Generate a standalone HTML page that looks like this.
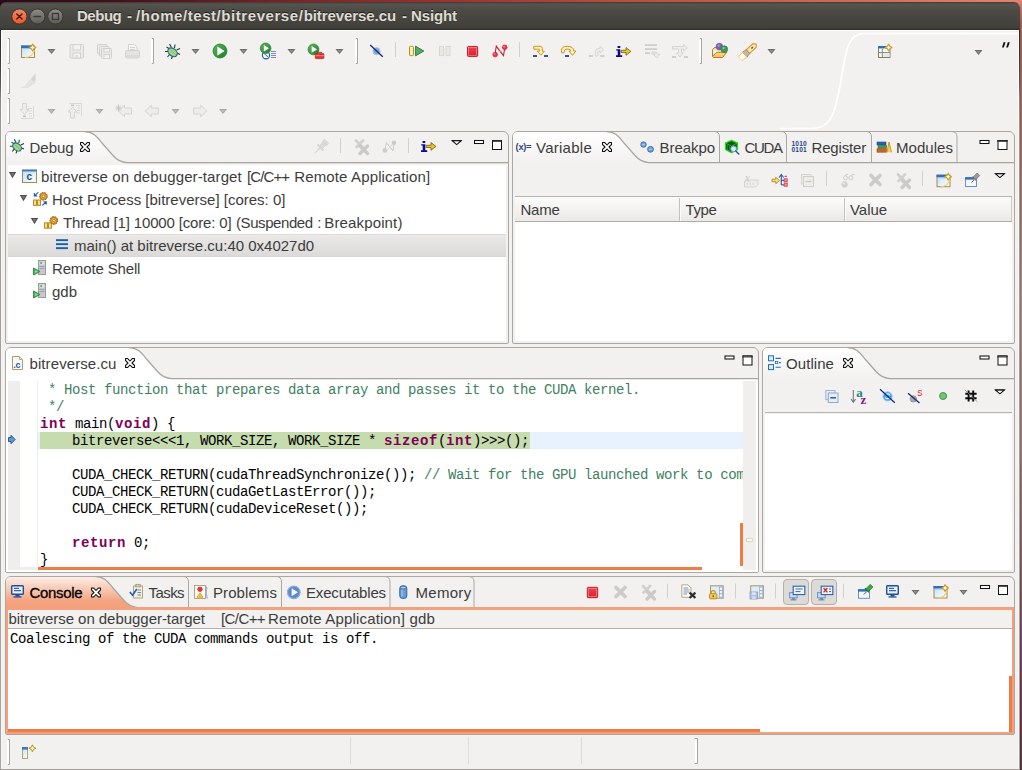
<!DOCTYPE html>
<html>
<head>
<meta charset="utf-8">
<title>Debug - Nsight</title>
<style>
html,body{margin:0;padding:0;}
body{width:1022px;height:770px;overflow:hidden;position:relative;font-family:"Liberation Sans",sans-serif;background:#2c0a1e;}
.a{position:absolute;}
div{box-sizing:border-box;}
#desk{left:0;top:0;width:1022px;height:8px;background:linear-gradient(90deg,#2c0a1e 0%,#3a0d1c 8%,#7a2326 28%,#a0342f 45%,#b9503f 62%,#cf6d5b 85%,#e88270 100%);}
#deskr{left:1020px;top:0;width:1px;height:770px;background:linear-gradient(180deg,#e08370 0%,#c06a5a 1.2%,#9a5548 3%,#9a5a4e 8%,#905a52 19.5%,#8c7872 39%,#8c6866 58%,#5e3042 91%,#52283c 100%);}
#deskr2{left:1021px;top:0;width:1px;height:770px;background:linear-gradient(180deg,#e88270 0%,#c87060 1.2%,#a86054 3%,#a46358 8%,#a46c64 19.5%,#a88a85 39%,#a07a78 58%,#744052 91%,#683848 100%);}
.edge{top:30px;width:1px;height:740px;background:linear-gradient(180deg,#2d2c29 0px,#3a3935 30px,#5a5955 54px,#8a8884 70px,#a09d98 104px,#a8a6a2 100%);}
.edgehi{top:30px;width:1px;height:740px;background:linear-gradient(180deg,#ffffff 0px,#ffffff 60px,#f6f6f5 120px,#f6f6f5 100%);}
#win{left:0;top:2px;width:1020px;height:768px;border-radius:6px 6px 0 0;overflow:hidden;}
#winbg{left:0px;top:28px;width:1020px;height:740px;background:#f2f1f0;border-top:1px solid #fdfcfc;}
#title{left:0;top:0;width:1020px;height:28px;background:linear-gradient(180deg,#3b3a36 0px,#55544e 2px,#4b4a45 9px,#403f3a 26px,#2e2d29 28px);}
.tt{top:4px;font-weight:bold;font-size:15px;color:#dfdbd2;white-space:nowrap;line-height:20px;text-shadow:0 -1px 0 rgba(0,0,0,.6);}
.t{font-size:15px;color:#3c3c3c;white-space:nowrap;line-height:23px;height:23px;}
.tab{font-size:15px;color:#3c3c3c;white-space:nowrap;line-height:20px;height:20px;}
.m{font-family:"Liberation Mono",monospace;font-size:14px;letter-spacing:-0.4px;line-height:17px;height:17px;white-space:pre;color:#000;margin-top:1px;}
.k{color:#7f0055;font-weight:bold;letter-spacing:0.6px;}
.c{color:#3f7f5f;}
.pb{border:1px solid #aba7a2;border-radius:6px 6px 2px 2px;}
.wh{background:#fff;}
svg{position:absolute;overflow:visible;}
</style>
</head>
<body>
<div id="desk" class="a"></div>
<div id="deskr" class="a"></div>
<div id="deskr2" class="a"></div>
<div id="win" class="a">
  <div id="title" class="a"></div>
  <div id="winbg" class="a"></div>
  <div class="a tt" style="left:77px;letter-spacing:-0.47px;">Debug</div>
  <div class="a tt" style="left:127px;">-</div>
  <div class="a tt" style="left:136px;letter-spacing:0.56px;">/home/test/bitreverse/</div>
  <div class="a tt" style="left:303.7px;letter-spacing:-0.08px;">bitreverse.cu</div>
  <div class="a tt" style="left:402px;">-</div>
  <div class="a tt" style="left:411px;letter-spacing:-0.11px;">Nsight</div>
</div>
<div class="a edge" style="left:0"></div><div class="a edge" style="left:1019px"></div><div class="a edgehi" style="left:1px"></div><div class="a edgehi" style="left:1018px"></div>
<div class="a" style="left:0px;top:769px;width:1020px;height:1px;background:#a5a29d;"></div>

<svg class="a" style="left:0;top:0" width="120" height="32">
 <defs>
  <linearGradient id="gClose" x1="0" y1="0" x2="0" y2="1"><stop offset="0" stop-color="#f28a64"/><stop offset="1" stop-color="#ed5824"/></linearGradient>
  <linearGradient id="gWb" x1="0" y1="0" x2="0" y2="1"><stop offset="0" stop-color="#8d8c87"/><stop offset="1" stop-color="#5c5b56"/></linearGradient>
 </defs>
 <circle cx="19.4" cy="16.5" r="7.6" fill="url(#gClose)" stroke="#36352f" stroke-width="1"/>
 <path d="M16.8,13.9 L22,19.1 M22,13.9 L16.8,19.1" stroke="#4a1608" stroke-width="1.4" stroke-linecap="round"/>
 <circle cx="37.4" cy="16.5" r="7.6" fill="url(#gWb)" stroke="#36352f" stroke-width="1"/>
 <path d="M34.1,16.5 H40.7" stroke="#3a3934" stroke-width="1.4" stroke-linecap="round"/>
 <circle cx="55.4" cy="16.5" r="7.6" fill="url(#gWb)" stroke="#36352f" stroke-width="1"/>
 <rect x="52.4" y="13.5" width="6" height="6" fill="none" stroke="#3a3934" stroke-width="1.3"/>
</svg>
<!-- ===== DEBUG PANEL ===== -->
<div class="a pb" style="left:5px;top:131px;width:504px;height:213px;"></div>
<div class="a wh" style="left:8px;top:165px;width:498px;height:176px;"></div>

<!-- debug tab header -->
<svg class="a" style="left:0;top:0" width="1022" height="770">
 <defs>
  <linearGradient id="tabg" x1="0" y1="0" x2="0" y2="1"><stop offset="0" stop-color="#ffffff"/><stop offset="1" stop-color="#f2f1f0"/></linearGradient>
  <linearGradient id="tabo" x1="0" y1="0" x2="0" y2="1"><stop offset="0" stop-color="#fdeee7"/><stop offset="0.78" stop-color="#f4a380"/><stop offset="1" stop-color="#f4a07c"/></linearGradient>
 </defs>
 <!-- Debug active tab -->
 <path d="M6,162.5 L6,137 Q6,132 11,132 L84.5,132 C93.0,132 97.0,137.5 102.0,143.5 L113.0,156 C117.0,160.5 121.0,162.5 127.0,162.5 Z" fill="url(#tabg)"/>
 <path d="M84.5,131.5 C93.0,131.5 97.0,137.0 102.0,143.0 L113.0,155.5 C117.0,160.0 121.0,162.5 127.0,162.5 L508,162.5" fill="none" stroke="#a9a5a0" stroke-width="1.25"/>
</svg>
<div class="a tab" style="left:29.5px;top:138px;">Debug</div>
<!-- selected row -->
<div class="a" style="left:8px;top:234px;width:498px;height:23px;background:linear-gradient(180deg,#dbdad8 0px,#dbdad8 1px,#eae9e8 1px,#e2e1df 12px,#dcdbd9 22px,#d8d7d5 22px,#d8d7d5 23px);"></div>
<div class="a t" style="left:41px;top:165px;letter-spacing:0.11px;">bitreverse on debugger-target</div>
<div class="a t" style="left:247px;top:165px;letter-spacing:-0.89px;">[C/C++</div>
<div class="a t" style="left:294.2px;top:165px;letter-spacing:0.14px;">Remote Application]</div>
<div class="a t" style="left:52px;top:188px;">Host Process [bitreverse] [cores: 0]</div>
<div class="a t" style="left:63px;top:211px;letter-spacing:-0.16px;">Thread [1] 10000 [core: 0]</div>
<div class="a t" style="left:236px;top:211px;letter-spacing:-0.42px;">(Suspended</div>
<div class="a t" style="left:317.2px;top:211px;">:</div>
<div class="a t" style="left:324.3px;top:211px;letter-spacing:0.14px;">Breakpoint)</div>
<div class="a t" style="left:74px;top:234px;">main() at bitreverse.cu:40 0x4027d0</div>
<div class="a t" style="left:52px;top:257px;letter-spacing:-0.15px;">Remote Shell</div>
<div class="a t" style="left:52px;top:280px;">gdb</div>
<!--DEBUGTREE-->

<!-- ===== VARIABLES PANEL ===== -->
<div class="a pb" style="left:512px;top:131px;width:503px;height:213px;"></div>
<div class="a wh" style="left:515px;top:196px;width:497px;height:145px;"></div>

<svg class="a" style="left:0;top:0" width="1022" height="770">
 <!-- Variables active tab -->
 <path d="M513,162.5 L513,137 Q513,132 518,132 L606.5,132 C615.0,132 619.0,137.5 624.0,143.5 L635.0,156 C639.0,160.5 643.0,162.5 649.0,162.5 Z" fill="url(#tabg)"/>
 <path d="M606.5,131.5 C615.0,131.5 619.0,137.0 624.0,143.0 L635.0,155.5 C639.0,160.0 643.0,162.5 649.0,162.5 L1014,162.5" fill="none" stroke="#a9a5a0" stroke-width="1.25"/>
 <!-- inactive tab separators -->
 <path d="M714,131.5 Q719.5,131.5 719.5,137 L719.5,162" fill="none" stroke="#aba7a2"/>
 <path d="M781,131.5 Q786.5,131.5 786.5,137 L786.5,162" fill="none" stroke="#aba7a2"/>
 <path d="M866,131.5 Q871.5,131.5 871.5,137 L871.5,162" fill="none" stroke="#aba7a2"/>
 <path d="M951.5,131.5 Q957,131.5 957,137 L957,162" fill="none" stroke="#aba7a2"/>
</svg>
<div class="a tab" style="left:536px;top:138px;letter-spacing:0.26px;">Variable</div>
<div class="a tab" style="left:659.5px;top:138px;letter-spacing:-0.05px;">Breakpo</div>
<div class="a tab" style="left:744.5px;top:138px;letter-spacing:-1.3px;">CUDA</div>
<div class="a tab" style="left:811.5px;top:138px;letter-spacing:-0.17px;">Register</div>
<div class="a tab" style="left:896px;top:138px;letter-spacing:0.04px;">Modules</div>
<!-- table header -->
<div class="a" style="left:515px;top:196px;width:497px;height:26px;background:linear-gradient(180deg,#fbfbfa 0%,#f4f3f2 50%,#eae9e7 100%);border-top:1px solid #b8b5b0;border-bottom:1px solid #b0ada8;"></div>
<div class="a" style="left:679px;top:198px;width:1px;height:23px;background:#c4c1bc;"></div><div class="a" style="left:680px;top:198px;width:1px;height:23px;background:#fbfbfa;"></div>
<div class="a" style="left:844px;top:198px;width:1px;height:23px;background:#c4c1bc;"></div><div class="a" style="left:845px;top:198px;width:1px;height:23px;background:#fbfbfa;"></div>
<div class="a" style="left:1011px;top:197px;width:1px;height:24px;background:#cfccc8;"></div>
<div class="a tab" style="left:520.5px;top:200px;letter-spacing:-0.25px;">Name</div>
<div class="a tab" style="left:685.5px;top:200px;letter-spacing:-0.38px;">Type</div>
<div class="a tab" style="left:850px;top:200px;letter-spacing:-0.05px;">Value</div>
<!--VARS-->

<!-- ===== EDITOR PANEL ===== -->
<div class="a pb" style="left:5px;top:347px;width:754px;height:226px;"></div>
<div class="a wh" style="left:6px;top:379px;width:752px;height:193px;"></div>

<svg class="a" style="left:0;top:0" width="1022" height="770">
 <path d="M6,379 L6,353 Q6,348 11,348 L129,348 C137.5,348 141.5,353.5 146.5,359.5 L157.5,372 C161.5,376.5 165.5,378.5 171.5,378.5 L171.5,379 Z" fill="#ffffff"/>
 <path d="M129,347.5 C137.5,347.5 141.5,353.0 146.5,359.0 L157.5,371.5 C161.5,376.0 165.5,378.5 171.5,378.5 L758,378.5" fill="none" stroke="#a9a5a0" stroke-width="1.25"/>
</svg>
<div class="a tab" style="left:29.5px;top:354px;letter-spacing:0.09px;">bitreverse.cu</div>
<!-- rulers -->
<div class="a" style="left:8px;top:381px;width:12px;height:189px;background:#efeeed;"></div>
<div class="a" style="left:8px;top:567px;width:30px;height:3px;background:#efeeed;"></div>
<div class="a" style="left:37px;top:381px;width:1px;height:189px;background:#ececec;"></div>
<div class="a" style="left:743px;top:381px;width:13px;height:189px;background:#f0efee;"></div>
<!-- current line -->
<div class="a" style="left:38px;top:432px;width:705px;height:17px;background:#e8f2fe;"></div>
<div class="a" style="left:40px;top:432px;width:490px;height:17px;background:#c6dbae;"></div>
<!-- code -->
<div class="a m" style="left:40px;top:381px;"><span class="c"> * Host function that prepares data array and passes it to the CUDA kernel.</span></div>
<div class="a m" style="left:40px;top:398px;"><span class="c"> */</span></div>
<div class="a m" style="left:40px;top:415px;"><span class="k">int</span> main(<span class="k">void</span>) {</div>
<div class="a m" style="left:40px;top:432px;">    bitreverse&lt;&lt;&lt;1, WORK_SIZE, WORK_SIZE * <span class="k">sizeof</span>(<span class="k">int</span>)&gt;&gt;&gt;();</div>
<div class="a m" style="left:40px;top:466px;width:703px;overflow:hidden;">    CUDA_CHECK_RETURN(cudaThreadSynchronize()); <span class="c">// Wait for the GPU launched work to complete</span></div>
<div class="a m" style="left:40px;top:483px;">    CUDA_CHECK_RETURN(cudaGetLastError());</div>
<div class="a m" style="left:40px;top:500px;">    CUDA_CHECK_RETURN(cudaDeviceReset());</div>
<div class="a m" style="left:40px;top:534px;">    <span class="k">return</span> 0;</div>
<div class="a m" style="left:40px;top:551px;">}</div>
<!-- scrollbars -->
<div class="a" style="left:38px;top:567px;width:664px;height:3px;background:#ef7b45;"></div>
<div class="a" style="left:740px;top:523px;width:3px;height:43px;background:#ef7b45;"></div>
<div class="a" style="left:746px;top:538px;width:7px;height:4px;border:1px solid #cfe0b8;background:#f6faf0;"></div>
<!--EDITOR-->

<!-- ===== OUTLINE PANEL ===== -->
<div class="a pb" style="left:762px;top:347px;width:253px;height:226px;"></div>
<div class="a wh" style="left:765px;top:414px;width:247px;height:156px;"></div>

<svg class="a" style="left:0;top:0" width="1022" height="770">
 <path d="M763,378.5 L763,353 Q763,348 768,348 L847.5,348 C856.0,348 860.0,353.5 865.0,359.5 L876.0,372 C880.0,376.5 884.0,378.5 890.0,378.5 Z" fill="url(#tabg)"/>
 <path d="M847.5,347.5 C856.0,347.5 860.0,353.0 865.0,359.0 L876.0,371.5 C880.0,376.0 884.0,378.5 890.0,378.5 L1014,378.5" fill="none" stroke="#a9a5a0" stroke-width="1.25"/>
</svg>
<div class="a tab" style="left:786px;top:354px;letter-spacing:0.07px;">Outline</div>
<div class="a" style="left:765px;top:412px;width:247px;height:1px;background:#b8b5b0;"></div>
<!--OUTLINE-->

<!-- ===== CONSOLE PANEL ===== -->
<div class="a pb" style="left:5px;top:576px;width:1010px;height:159px;"></div>

<svg class="a" style="left:0;top:0" width="1022" height="770">
 <path d="M6,608 L6,582 Q6,577 11,577 L95.5,577 C104.0,577 108.0,582.5 113.0,588.5 L124.0,601 C128.0,605.5 132.0,607.5 138.0,607.5 L138,608 Z" fill="url(#tabo)"/>
 <path d="M95.5,576.5 C104.0,576.5 108.0,582.0 113.0,588.0 L124.0,600.5 C128.0,605.0 132.0,607.5 138.0,607.5" fill="none" stroke="#a9a5a0" stroke-width="1.25"/>
 <path d="M183,576.5 Q188.5,576.5 188.5,582 L188.5,607" fill="none" stroke="#aba7a2"/>
 <path d="M276,576.5 Q281.5,576.5 281.5,582 L281.5,607" fill="none" stroke="#aba7a2"/>
 <path d="M384.5,576.5 Q390,576.5 390,582 L390,607" fill="none" stroke="#aba7a2"/>
 <path d="M468.5,576.5 Q474,576.5 474,582 L474,607" fill="none" stroke="#aba7a2"/>
</svg>
<!-- orange frame -->
<div class="a" style="left:6px;top:607px;width:1008px;height:127px;border:2px solid #f4a07c;border-top-width:3px;border-bottom-width:2px;"></div>
<div class="a wh" style="left:8px;top:629px;width:1004px;height:103px;"></div>
<div class="a" style="left:8px;top:628px;width:1004px;height:1px;background:#b4b1ac;"></div>
<div class="a tab" style="left:29.5px;top:583px;letter-spacing:-0.32px;color:#000;-webkit-text-stroke:0.3px #000;">Console</div>
<div class="a tab" style="left:148.5px;top:583px;letter-spacing:-0.57px;">Tasks</div>
<div class="a tab" style="left:213px;top:583px;letter-spacing:0.08px;">Problems</div>
<div class="a tab" style="left:306px;top:583px;letter-spacing:-0.16px;">Executables</div>
<div class="a tab" style="left:415.5px;top:583px;letter-spacing:0.3px;">Memory</div>
<div class="a tab" style="left:8.5px;top:609px;letter-spacing:-0.04px;">bitreverse on debugger-target</div>
<div class="a tab" style="left:221px;top:609px;letter-spacing:-0.59px;">[C/C++</div>
<div class="a tab" style="left:268px;top:609px;letter-spacing:0.19px;">Remote Application] gdb</div>
<div class="a m" style="left:10px;top:630px;">Coalescing of the CUDA commands output is off.</div>
<!-- scroll indicators -->
<div class="a" style="left:8px;top:729px;width:752px;height:3px;background:#ef7b45;"></div>
<div class="a" style="left:1009px;top:676px;width:3px;height:56px;background:#ef7b45;"></div>
<!--CONSOLE-->

<!-- ===== STATUS BAR ===== -->
<!--PN-START--><svg class="a" style="left:0;top:0" width="1022" height="770">
<defs>
 <g id="tri"><path d="M0,0 H7.4 L3.7,6.2 Z" fill="#4f4f4f"/><path d="M1.8,1 H5.6 L3.7,4.2 Z" fill="#737373"/></g>
 <g id="gear"><circle r="3.9" fill="#e9a820" stroke="#8a4a12" stroke-width="0.9" stroke-dasharray="1.6 1.1"/><circle r="3.1" fill="#f0b83a" stroke="#b06a14" stroke-width="0.8"/><circle r="1.3" fill="#fff" stroke="#8a4a12" stroke-width="0.7"/></g>
 <g id="bars"><rect x="0.5" y="0.5" width="3" height="5.4" fill="#f6dc7a" stroke="#b8902a"/><rect x="4.5" y="0.5" width="3" height="5.4" fill="#f6dc7a" stroke="#b8902a"/></g>
 <g id="proc"><rect x="5.5" y="0.5" width="7" height="14" fill="#c4c8d4" stroke="#9a9c8c"/><rect x="6.5" y="1.5" width="5" height="3.2" fill="#dfe2ea"/><rect x="7.3" y="2.2" width="1.8" height="1.6" fill="#3aa84a"/><path d="M6.5,6.5 H11.5 M6.5,8.5 H11.5" stroke="#9ea2b2" stroke-width="1"/><path d="M0.5,8 L7,11.5 L0.5,15 Z" fill="#4cb05a" stroke="#2a8a3a" stroke-width="0.9" stroke-linejoin="round"/><path d="M2,10 L5,11.5 L2,13 Z" fill="#9ad8a0"/></g>
 <g id="xdis"><path d="M1.5,1.5 L10.5,10.5 M10.5,1.5 L1.5,10.5" stroke="#cdcbc8" stroke-width="3.7" stroke-linecap="round"/></g>
 <g id="xxdis"><path d="M1.5,1.5 L8.5,8.5 M8.5,1.5 L1.5,8.5" stroke="#d2d0cd" stroke-width="2.8" stroke-linecap="round" stroke-dasharray="1.2 0.8"/><path d="M5.5,7 L13,14.5 M13,7 L5.5,14.5" stroke="#cccac7" stroke-width="3.4" stroke-linecap="round"/></g>
 <g id="monitor"><rect x="0.7" y="0.7" width="11.6" height="8.6" rx="0.8" fill="#e8f1fb" stroke="#1f4f9a" stroke-width="1.4"/><path d="M3,3.4 H8 M3,5.6 H10" stroke="#3a66a8" stroke-width="1.1"/><rect x="4.5" y="10" width="4" height="1.4" fill="#1f4f9a"/><rect x="2.5" y="11.3" width="8" height="1.3" fill="#1f4f9a"/></g>
</defs>

<!-- ============ DEBUG TAB ============ -->
<g transform="translate(17,146.3) scale(0.93)">
 <g stroke="#1f3b3b" stroke-width="1.15" fill="none">
  <path d="M-2.5,-2.5 L-6,-4.5 M-3.5,0 L-7.5,0 M-2.5,2.5 L-5,5.5 M2,-3.5 L2.5,-7 M4,-1.5 L7.5,-3 M4.5,1.5 L7.5,3 M0,4 L-1,7.5 M-1,-4 L-3,-7.5"/>
 </g>
 <ellipse cx="0.5" cy="0.5" rx="5.2" ry="3.7" transform="rotate(40)" fill="#a9d18e" stroke="#1b6e7e" stroke-width="1.2"/>
 <path d="M-2,-1.5 L3,3" stroke="#7fb86a" stroke-width="1"/>
</g>
<use href="#closex" x="80" y="142"/>
<!-- debug toolbar -->
<g transform="translate(321,147) rotate(45)" fill="#dedcd9" stroke="#d0cdc9" stroke-width="0.6">
 <rect x="-3" y="-8" width="6" height="3"/><rect x="-2" y="-5" width="4" height="5"/><path d="M-4,0 H4 V1.5 H-4 Z"/><path d="M-0.5,1.5 L0,9 L0.5,1.5 Z"/>
</g>
<use href="#sep" x="340" y="138"/>
<use href="#xxdis" x="354.5" y="139"/>
<g stroke="#cfccc8" fill="none" stroke-width="1"><path d="M385,150 L386.5,142.5 L389.5,146.5 M390.5,147.5 L393,151 L394,144"/><path d="M386.5,143 L393,151 M386.5,151 L393,143" stroke-width="0.6"/></g>
<circle cx="384.8" cy="150.4" r="2.3" fill="#cfccc8"/><circle cx="394" cy="142.8" r="2.3" fill="#cfccc8"/>
<use href="#sep" x="408" y="138"/>
<use href="#istep" x="421" y="140.5"/>
<use href="#vmenu" x="451.3" y="140"/>
<use href="#minb" x="474" y="140"/>
<use href="#maxb" x="492" y="140"/>

<!-- tree expanders -->
<use href="#tri" x="8.8" y="172"/><use href="#tri" x="19.8" y="195"/><use href="#tri" x="30.8" y="218"/>
<!-- row1 icon: C launch -->
<g transform="translate(22,169)">
 <rect x="0.5" y="1.5" width="14" height="12" fill="url(#gWin)" stroke="#a8894b"/>
 <rect x="0" y="0.5" width="15" height="1.4" fill="#2e6fbc"/><rect x="0.5" y="1.9" width="14" height="1.2" fill="#8ab4e0"/>
 <text x="4.6" y="11.2" font-family="Liberation Sans" font-weight="bold" font-size="10" fill="#1f4f86">c</text>
</g>
<!-- row2 icon: host process -->
<use href="#bars" x="33" y="199.5"/>
<use href="#gear" x="43.4" y="196.3"/>
<path d="M38.3,192.3 L34.6,195.6 M34.3,193 V195.9 H37.2" stroke="#1f5aa8" stroke-width="1.1" fill="none"/>
<path d="M42.3,205.3 L46,202 M46.3,204.6 V201.7 H43.4" stroke="#1f5aa8" stroke-width="1.1" fill="none"/>
<!-- row3 icon: thread -->
<use href="#bars" x="44" y="222.3"/>
<use href="#gear" x="53.8" y="220.5"/>
<!-- row4: stack frame -->
<rect x="56" y="239.2" width="12" height="1.9" fill="#1a5fa8"/><rect x="56" y="243.2" width="12" height="1.9" fill="#1a5fa8"/><rect x="56" y="247.2" width="12" height="1.9" fill="#1a5fa8"/>
<!-- row5,6 -->
<use href="#proc" x="33" y="260"/><use href="#proc" x="33" y="283"/>

<!-- ============ VARIABLES TABS ============ -->
<text x="515.6" y="150" font-family="Liberation Sans" font-weight="bold" font-size="9.3" fill="#2b4a7c" letter-spacing="-0.3">(x)=</text>
<use href="#closex" x="602" y="142"/>
<circle cx="643.5" cy="144.6" r="2.7" fill="#6fa6d4" stroke="#2d6aa8" stroke-width="0.9"/>
<circle cx="650.5" cy="149.3" r="2.9" fill="#6fa6d4" stroke="#2d6aa8" stroke-width="0.9"/>
<path d="M642,144.6 H645 M649,149.3 H652" stroke="#b8d4ec" stroke-width="0.8"/>
<!-- CUDA -->
<path d="M731.5,140.3 L737.5,143 V149.5 L731.5,152.8 L725.5,149.5 V143 Z" fill="#0d5a12" stroke="#22dd22" stroke-width="1.3" stroke-linejoin="round"/>
<path d="M725.5,143 L731.5,146 L737.5,143 M731.5,146 V152.8" stroke="#22c022" stroke-width="0.8" fill="none"/>
<path d="M727.5,144.5 V150.5 M729.5,145.5 V151.5" stroke="#1a9a1a" stroke-width="0.7"/>
<circle cx="733.6" cy="148.8" r="2.9" fill="#dbeaf6" stroke="#6a9ac8" stroke-width="1"/>
<path d="M735.8,151 L738.8,154" stroke="#2d5aa0" stroke-width="1.5" stroke-linecap="round"/>
<!-- Registers -->
<g font-family="Liberation Sans" font-weight="bold" font-size="6.6" fill="#1f3f86" letter-spacing="0.1"><text x="791.6" y="145.6">1010</text><text x="791.6" y="151.6">0101</text></g>
<!-- Modules -->
<rect x="877" y="142" width="9" height="3" fill="#2d5fa8" stroke="#1f4a8a" stroke-width="0.6"/>
<rect x="878" y="145.3" width="8.5" height="3" fill="#3f9a5a" stroke="#2a7a42" stroke-width="0.6"/>
<rect x="877" y="148.8" width="9.5" height="3.4" fill="#c8642a" stroke="#a04a1a" stroke-width="0.6"/>
<path d="M887,152.3 L889,142 L891.5,152.3" fill="#f8d048" stroke="#d09a1a" stroke-width="1" stroke-linejoin="round"/>
<use href="#minb" x="979.5" y="140"/><use href="#maxb" x="997.5" y="140"/>

<!-- variables toolbar -->
<g stroke="#d3d0cc" fill="#efedeb" stroke-width="0.9">
 <path d="M746.5,180 H758 V184.5 L755.5,187 H744.5 V182 Z"/>
 <path d="M746.5,183.8 H747.8 M749.5,183.8 H750.8 M752.5,183.8 H753.8" stroke="#c8c5c1" stroke-width="1.3"/>
</g>
<text x="744.5" y="182" font-family="Liberation Serif" font-style="italic" font-size="12" fill="#cfccc8">x</text>
<!-- logical structure -->
<path d="M772,179.3 H775.8 V177.3 L779.6,180.5 L775.8,183.7 V181.7 H772 Z" fill="#fbe088" stroke="#b8860b" stroke-width="0.9" stroke-linejoin="round"/>
<path d="M781.3,175.5 V185 M781.3,180.3 H784 M781.3,184.8 H784 M779,177.5 L781.3,174.5 L783.6,177.5" stroke="#3a62b0" stroke-width="1.2" fill="none"/>
<path d="M784.5,176.3 H787" stroke="#3a62b0" stroke-width="1"/>
<rect x="784.2" y="178.8" width="3" height="3" fill="#f0a0a8" stroke="#d63a4a" stroke-width="0.9"/><rect x="784.2" y="183.2" width="3" height="3" fill="#f0a0a8" stroke="#d63a4a" stroke-width="0.9"/>
<!-- collapse all disabled -->
<rect x="801.5" y="174.5" width="9.5" height="9.5" fill="#f0eeec" stroke="#d6d3cf"/><rect x="803.5" y="176.5" width="10" height="10" fill="#efedeb" stroke="#d0cdc9"/><path d="M805.5,181.5 H811.5" stroke="#cac7c3" stroke-width="1.2"/>
<use href="#sep" x="826" y="171"/>
<!-- glasses disabled -->
<g fill="none" stroke="#cfccc8" stroke-width="1"><circle cx="845.5" cy="177.8" r="2"/><circle cx="850.8" cy="177.8" r="2"/><path d="M845,175.8 Q846,173.8 848,174.3 M851,175.8 Q852.5,173.6 854.5,174.8"/></g>
<circle cx="844.6" cy="184.4" r="3.1" fill="#d2d0cd"/><circle cx="843.7" cy="183.5" r="1.2" fill="#e8e6e4"/>
<use href="#xdis" x="869.5" y="174"/>
<use href="#xxdis" x="896.5" y="173"/>
<use href="#sep" x="922" y="171"/>
<use href="#pnew" x="936.5" y="173.7"/>
<!-- pin view -->
<rect x="965.5" y="177.7" width="11" height="8.8" fill="#f2f8fd" stroke="#6f90c0"/><rect x="965" y="177.2" width="9" height="2.4" fill="#2e6fbc"/>
<path d="M971.5,182.5 L974,180" stroke="#555" stroke-width="0.9"/>
<g transform="translate(975.5,177.2) rotate(45)"><rect x="-1.8" y="-4.2" width="3.6" height="5.6" fill="#9a9a9a" stroke="#6a6a6a" stroke-width="0.6"/><rect x="-2.6" y="1.2" width="5.2" height="1.3" fill="#777"/></g>
<use href="#vmenu" x="994.5" y="173"/>

<!-- ============ EDITOR TAB ============ -->
<path d="M12.5,356.5 H19.5 L22.5,359.5 V369.5 H12.5 Z" fill="#f5f9fd" stroke="#b39b62" stroke-linejoin="round"/>
<path d="M19.5,356.5 V359.5 H22.5" fill="#e8dcb8" stroke="#b39b62" stroke-width="0.8"/>
<text x="13.3" y="367.6" font-family="Liberation Sans" font-weight="bold" font-size="9" fill="#2a5a9a" letter-spacing="-0.4">.c</text>
<use href="#closex" x="125" y="358"/>
<use href="#minb" x="724.5" y="355.5"/><use href="#maxb" x="742.5" y="355.5"/>
<!-- instruction pointer arrow -->
<path d="M8.5,437.5 H11 V435.2 L15.2,439.5 L11,443.8 V441.5 H8.5 Z" fill="#5b9bd5" stroke="#1f4f9a" stroke-width="0.9" stroke-linejoin="round"/>

<!-- ============ OUTLINE ============ -->
<rect x="768.5" y="355.8" width="5" height="5" fill="#dcebf8" stroke="#1e6fbf"/><rect x="768.5" y="364.6" width="5" height="5" fill="#dcebf8" stroke="#1e6fbf"/>
<path d="M775.5,358.4 H780.8 M775.5,367.2 H780.8 M779,362.6 H780.8" stroke="#1e6fbf" stroke-width="1.1"/>
<rect x="775.6" y="361.4" width="2.2" height="2.2" fill="#fff" stroke="#1e6fbf" stroke-width="0.8"/>
<use href="#closex" x="843" y="358"/>
<use href="#minb" x="979.5" y="355.5"/><use href="#maxb" x="997.5" y="355.5"/>
<!-- outline toolbar -->
<rect x="825.8" y="390.5" width="9.2" height="9.2" fill="#e4edf8" stroke="#9fb4d2"/><rect x="828.3" y="393" width="9.7" height="9.5" fill="#e4edf8" stroke="#8fa8cc"/><path d="M830.3,397.8 H836" stroke="#2a5a9a" stroke-width="1.5"/>
<path d="M853.3,390 V401.5 M851,399 L853.3,402.3 L855.6,399" stroke="#6c7a86" stroke-width="1.1" fill="none"/>
<text x="856.3" y="396.6" font-family="Liberation Serif" font-weight="bold" font-size="13" fill="#1b8a78">a</text>
<text x="860.6" y="403.6" font-family="Liberation Serif" font-weight="bold" font-size="13" fill="#8a1a8a">z</text>
<circle cx="887.6" cy="396.4" r="4.6" fill="#4ea6e6" stroke="#8cc6f0" stroke-width="0.8"/>
<path d="M885.5,394.5 Q888,393 890,395 M885.2,397.6 Q887.6,399.8 890,397.6" stroke="#e6f3fc" stroke-width="1.1" fill="none"/>
<path d="M880,389.3 L894.8,402.7" stroke="#17247f" stroke-width="1.2"/>
<circle cx="913.4" cy="398.9" r="3.2" fill="#a8a8a8" stroke="#8a8a8a" stroke-width="0.7"/>
<text x="0" y="0" transform="translate(917.2,396.2) scale(0.82,1)" font-family="Liberation Sans" font-size="9.5" fill="#d8142a">S</text>
<path d="M908,393.3 L919.5,403" stroke="#17247f" stroke-width="1.2"/>
<circle cx="943.1" cy="396" r="3.5" fill="#77c277" stroke="#3a9a4a" stroke-width="1"/>
<path d="M968.6,390.5 V401.5 M973.2,390.5 V401.5 M965.3,393.8 H976.6 M965.3,398.3 H976.6" stroke="#0a0a0a" stroke-width="1.9"/>
<path d="M964.8,389.8 L977.3,401.8" stroke="#8a8a8a" stroke-width="0.8"/>
<use href="#vmenu" x="994.5" y="389.2"/>

<!-- ============ CONSOLE ============ -->
<use href="#monitor" x="11" y="585"/>
<use href="#closex" x="91" y="587.5"/>
<!-- Tasks -->
<rect x="133.5" y="586" width="9" height="12" fill="#f3eee0" stroke="#b8a47a"/><rect x="135.8" y="584.3" width="4.4" height="2.6" fill="#d8d0b8" stroke="#9a8a60" stroke-width="0.7"/>
<path d="M137.5,590 H141 M137.5,592.5 H141 M137.5,595 H141" stroke="#6a86b8" stroke-width="1"/>
<path d="M129.8,592 L132.6,595.2 L136.8,589" stroke="#1f5fb8" stroke-width="1.6" fill="none"/>
<!-- Problems -->
<rect x="194.5" y="585.5" width="11" height="13" fill="#fbfaf6" stroke="#b8a47a"/>
<path d="M204.5,585.5 Q207.5,587 206.5,590 Q205.5,593 207.5,598.5" fill="none" stroke="#9ab0d0" stroke-width="1.2"/>
<circle cx="200" cy="589.3" r="2.3" fill="#e03a3a" stroke="#b81e1e" stroke-width="0.6"/>
<path d="M200,592.8 L203,597.3 H197 Z" fill="#f8c838" stroke="#c8901a" stroke-width="0.7" stroke-linejoin="round"/>
<!-- Executables -->
<circle cx="293.8" cy="592.3" r="6.3" fill="#5a88c8" stroke="#8fb0dc" stroke-width="1.2"/>
<path d="M291.6,588.3 L298,592.3 L291.6,596.3 Z" fill="#f4f8fc"/>
<!-- Memory -->
<rect x="399.8" y="585.8" width="7" height="12.6" rx="2.6" fill="#6a9ad8" stroke="#2d5fa8" stroke-width="1"/>
<ellipse cx="403.3" cy="587.6" rx="2.8" ry="1.3" fill="#b8d0ee" stroke="#2d5fa8" stroke-width="0.7"/>
<path d="M402,590 V596.5" stroke="#a8c4ea" stroke-width="1.3"/>

<!-- console toolbar -->
<rect x="587.3" y="587.3" width="10.4" height="10.4" rx="1" fill="url(#gRed)" stroke="#c81e2a"/><rect x="588.5" y="588.5" width="8" height="8" fill="none" stroke="#f08a92" stroke-width="0.7"/>
<use href="#xdis" x="614.5" y="586"/>
<use href="#xxdis" x="641.5" y="584.5"/>
<use href="#sep" x="667" y="583.5"/>
<!-- clear console -->
<path d="M681.8,584.8 H688 L691,587.8 V597.3 H681.8 Z" fill="#fbfaf4" stroke="#b8a880" stroke-linejoin="round"/>
<path d="M683.5,588 H688 M683.5,590 H689.5 M683.5,592 H689.5 M683.5,594 H687" stroke="#7f96c0" stroke-width="1"/>
<path d="M689.6,592.6 L695.4,598 M695.4,592.6 L689.6,598" stroke="#2e2e2e" stroke-width="2.3"/>
<!-- scroll lock -->
<rect x="710.5" y="585.8" width="12.7" height="12.4" fill="#dcecf8" stroke="#a89868"/>
<rect x="719" y="586.3" width="4" height="11.4" fill="#9ab4d8"/><rect x="719.9" y="587.6" width="2.2" height="2.2" fill="#fff"/><rect x="719.9" y="591" width="2.2" height="2.2" fill="#e8f0fa"/><rect x="719.9" y="594.4" width="2.2" height="2.2" fill="#fff"/>
<path d="M711.2,593.8 V592.6 Q711.2,590.6 713.2,590.6 Q715.2,590.6 715.2,592.6 V593.8" fill="none" stroke="#c8961a" stroke-width="1.2"/>
<rect x="709.6" y="593.6" width="7.2" height="5.2" rx="0.8" fill="#f4cc58" stroke="#b8860b" stroke-width="0.9"/><rect x="712.6" y="595.2" width="1.3" height="2" fill="#7a5a0a"/>
<use href="#sep" x="735" y="583.5"/>
<!-- word wrap / save (dim) -->
<rect x="750.7" y="585.8" width="12.7" height="12.4" fill="#dcecf8" stroke="#a89868"/>
<rect x="759.2" y="586.3" width="4" height="11.4" fill="#9ab4d8"/><rect x="760.1" y="587.6" width="2.2" height="2.2" fill="#fff"/><rect x="760.1" y="591" width="2.2" height="2.2" fill="#e8f0fa"/><rect x="760.1" y="594.4" width="2.2" height="2.2" fill="#fff"/>
<rect x="750" y="592" width="7.6" height="7" fill="#b4c0dc" stroke="#8a9cc4" stroke-width="0.8"/><rect x="751.8" y="592.4" width="4" height="2.4" fill="#e4eaf6"/><rect x="752" y="596.3" width="3.6" height="2.6" fill="#d4dcee"/>
<use href="#sep" x="775" y="583.5"/>
<!-- toggles -->
<rect x="783.5" y="579.5" width="25" height="25" rx="3.5" fill="#dddbd8" stroke="#b4b1ac"/>
<rect x="811.5" y="579.5" width="25" height="25" rx="3.5" fill="#dddbd8" stroke="#b4b1ac"/>
<g id="togi">
 <rect x="789.6" y="592.6" width="7.6" height="5.2" fill="#d0dcec" stroke="#6f8fc0" stroke-width="1"/><rect x="792" y="598.2" width="3" height="1.2" fill="#5f7fb0"/><rect x="790.5" y="599.3" width="6" height="1.1" fill="#5f7fb0"/>
 <rect x="793.2" y="586.2" width="11.6" height="8.4" fill="#eef4fc" stroke="#2d5fb0" stroke-width="1.1"/>
</g>
<path d="M795.5,589 H802.5 M795.5,591.6 H800.5" stroke="#3a66a8" stroke-width="1"/>
<use href="#togi" x="28" y="0"/>
<path d="M823.6,588 L827.4,592.4 M827.4,588 L823.6,592.4" stroke="#d81e2a" stroke-width="1.3"/><path d="M829,589 H831 M829,591.6 H831" stroke="#3a66a8" stroke-width="1"/>
<use href="#sep" x="843" y="583.5"/>
<!-- pin console -->
<rect x="858.5" y="589.7" width="11" height="8.6" fill="#f2f8fd" stroke="#6f90c0"/><rect x="858" y="589.2" width="9" height="2.4" fill="#2e6fbc"/>
<path d="M863.8,594.6 L866.3,592" stroke="#444" stroke-width="0.9"/>
<g transform="translate(868.3,589) rotate(45)"><rect x="-1.9" y="-4.6" width="3.8" height="6" fill="#3aa84a" stroke="#1f7a2a" stroke-width="0.7"/><rect x="-2.8" y="1.2" width="5.6" height="1.4" fill="#1f7a2a"/></g>
<!-- display selected console -->
<use href="#monitor" x="886" y="585"/>
<use href="#dd" x="911.5" y="590"/>
<use href="#pnew" x="933.5" y="585"/>
<use href="#dd" x="959.5" y="590"/>
<use href="#minb" x="980" y="585"/><use href="#maxb" x="998" y="585"/>

<!-- ============ STATUS BAR ============ -->
<use href="#grip" x="7" y="739"/>
<rect x="22.5" y="747.5" width="5" height="11" fill="url(#gWin)" stroke="#b8a468" stroke-width="1"/><rect x="22" y="747" width="6" height="2.6" fill="#3a78c0"/>
<path d="M32.4,744.8 L33.5,747.2 L35.9,748.3 L33.5,749.4 L32.4,751.8 L31.3,749.4 L28.9,748.3 L31.3,747.2 Z" fill="#fffbe0" stroke="#b8900f" stroke-width="1" stroke-linejoin="round"/>
<rect x="350" y="737" width="1" height="27" fill="#dedbd7"/><rect x="468" y="737" width="1" height="27" fill="#dedbd7"/><rect x="581" y="737" width="1" height="27" fill="#dedbd7"/>
<rect x="695" y="738" width="2" height="26" fill="#ffffff"/><path d="M694.5,738.5 H697.5 V763.5 H694.5" fill="none" stroke="#a9a59f"/>
</svg>
<!--PN-END-->

<!-- ===== TOOLBAR ===== -->
<!--TB-START--><svg class="a" style="left:0;top:0" width="1022" height="770">
<defs>
 <linearGradient id="gGreen" x1="0" y1="0" x2="1" y2="1"><stop offset="0" stop-color="#5cb85c"/><stop offset="1" stop-color="#1f7a2a"/></linearGradient>
 <linearGradient id="gWin" x1="0" y1="0" x2="1" y2="1"><stop offset="0" stop-color="#bfe0f8"/><stop offset="1" stop-color="#ffffff"/></linearGradient>
 <linearGradient id="gRed" x1="0" y1="0" x2="0" y2="1"><stop offset="0" stop-color="#e8485a"/><stop offset="1" stop-color="#d81e28"/></linearGradient>
 <linearGradient id="gFold" x1="0" y1="0" x2="0" y2="1"><stop offset="0" stop-color="#fbe7a6"/><stop offset="1" stop-color="#f0c060"/></linearGradient>
 <linearGradient id="gPersp" x1="0" y1="0" x2="1" y2="0"><stop offset="0" stop-color="#f2f1f0" stop-opacity="0"/><stop offset="1" stop-color="#ffffff"/></linearGradient>
 <g id="dd"><path d="M0,0 H8 L4,5 Z" fill="#6d6d6d"/><path d="M2,1 H6 L4,3.4 Z" fill="#8e8e8e"/></g>
 <g id="ddd"><path d="M0,0 H8 L4,5 Z" fill="#aaa7a3"/><path d="M2,1 H6 L4,3.4 Z" fill="#c2bfbb"/></g>
 <g id="grip"><rect x="0" y="0.5" width="2" height="25" fill="#ffffff"/><path d="M0.8,0.5 H2.5 V25.5 H0.8" fill="none" stroke="#a9a59f"/></g>
 <g id="sep"><rect x="0" y="0" width="1" height="15" fill="#d3d0cc"/></g>
 <g id="star"><path d="M0,-3.4 L1.2,-1.2 L3.4,0 L1.2,1.2 L0,3.4 L-1.2,1.2 L-3.4,0 L-1.2,-1.2 Z" fill="#fffbe0" stroke="#c99a1c" stroke-width="1.05" stroke-linejoin="round"/></g>
 <g id="vmenu"><path d="M0.9,0.7 H9.9 L5.4,4.6 Z" fill="#fff" stroke="#111" stroke-width="1.05" stroke-linejoin="miter"/><rect x="0.6" y="0.2" width="9.6" height="0.9" fill="#111"/></g>
 <g id="minb"><rect x="0.5" y="0.5" width="9" height="3" fill="#fff" stroke="#111" stroke-width="1.05"/></g>
 <g id="maxb"><rect x="0.5" y="0.5" width="9" height="9" fill="#fff" stroke="#111" stroke-width="1"/><rect x="0" y="0" width="10" height="1.9" fill="#1a1a1a"/><rect x="1" y="0.9" width="8" height="0.5" fill="#8a8a8a"/></g>
 <g id="closex"><path d="M0.55,0.55 H2.7 L5,3 L7.3,0.55 H9.45 V2.7 L7,5 L9.45,7.3 V9.45 H7.3 L5,7 L2.7,9.45 H0.55 V7.3 L3,5 L0.55,2.7 Z" fill="#fff" stroke="#0a0a0a" stroke-width="1.05" stroke-linejoin="round"/></g>
 <g id="istep"><path d="M1.6,0.5 H4.3 V2.5 H1.6 Z M0.2,3.7 H4.3 V9.8 H6.2 V11.4 H0 V9.8 H1.7 V5.1 H0.2 Z" fill="#0a0a8c"/>
   <path d="M5.2,4.8 H10 V2.1 L14.9,5.9 L10,9.8 V7 H5.2 Z" fill="#cdd42a" stroke="#8a4a10" stroke-width="0.8" stroke-linejoin="round"/></g>
 <g id="pnew"><rect x="0.5" y="1.5" width="13" height="11.5" fill="url(#gWin)" stroke="#a8894b"/><rect x="0" y="1" width="11" height="2.6" fill="#2e6fbc"/><rect x="1" y="3.6" width="9" height="1" fill="#9cc0e8"/><path d="M4,13 C9,13 12.8,10 13.3,5.5" fill="none" stroke="#f2cc52" stroke-width="1.1"/><use href="#star" x="11.6" y="3"/></g>
</defs>

<!-- perspective switcher curve -->
<path d="M644,128.5 H812 C832,128.5 836,110 841,80 C846,50 848,33.5 864,33.5 H1019" fill="none" stroke="url(#gPersp)" stroke-width="1.6"/>
<path d="M780,128.5 H812 C832,128.5 836,110 841,80 C846,50 848,33.5 864,33.5 H1019" fill="none" stroke="#ffffff" stroke-width="1.6"/>

<!-- grips -->
<use href="#grip" x="7" y="38"/><use href="#grip" x="7" y="68"/><use href="#grip" x="7" y="98"/>
<use href="#grip" x="151" y="38"/><use href="#grip" x="355" y="38"/><use href="#grip" x="699" y="38"/>
<use href="#sep" x="395" y="42"/><use href="#sep" x="519" y="42"/>

<!-- dropdowns row1 -->
<use href="#dd" x="47.5" y="49"/><use href="#dd" x="191.5" y="49"/><use href="#dd" x="239.5" y="49"/><use href="#dd" x="287.5" y="49"/><use href="#dd" x="335.5" y="49"/><use href="#dd" x="767.5" y="49"/><use href="#dd" x="974.5" y="50"/>
<!-- row3 disabled dropdowns -->
<use href="#ddd" x="47.5" y="109"/><use href="#ddd" x="95.5" y="109"/><use href="#ddd" x="171.5" y="109"/><use href="#ddd" x="219" y="109"/>

<!-- New -->
<use href="#pnew" x="21" y="44.5"/>

<!-- Save disabled -->
<g fill="#eceae8" stroke="#d4d2cf">
 <rect x="70" y="44.5" width="13.5" height="13.5" rx="1"/>
 <rect x="73" y="44.5" width="7.5" height="5.5" fill="#f4f3f2"/>
 <rect x="73" y="53" width="7.5" height="5" fill="#f4f3f2"/>
 <rect x="75.5" y="55" width="2.5" height="3" fill="#dedcd9" stroke="none"/>
</g>
<!-- Save all disabled -->
<g fill="#eceae8" stroke="#d4d2cf">
 <rect x="97.5" y="44.5" width="9.5" height="9.5" rx="1"/>
 <rect x="99.5" y="46.5" width="9.5" height="9.5" rx="1"/>
 <rect x="101.5" y="48.5" width="10" height="10" rx="1"/>
 <rect x="104" y="48.5" width="5.5" height="3.5" fill="#f4f3f2"/>
 <rect x="104" y="54.5" width="5.5" height="4" fill="#f4f3f2"/>
</g>
<!-- Print disabled -->
<g fill="#eceae8" stroke="#d4d2cf">
 <path d="M128.5,51 V44.5 H134.5 L137,47 V51" fill="#f6f5f4"/>
 <rect x="125.5" y="50.5" width="14" height="7.5" rx="1.5" fill="#e6e4e2"/>
 <path d="M130,47.5 H135 M130,49.5 H135" fill="none"/>
 <rect x="126" y="55" width="13" height="3" fill="#dddbd8" stroke="none"/>
</g>

<!-- Debug bug -->
<g transform="translate(172.5,51.5)">
 <g stroke="#1f3b3b" stroke-width="1.1" fill="none">
  <path d="M-2.5,-2.5 L-6,-4.5 M-3.5,0 L-7.5,0 M-2.5,2.5 L-5,5.5 M2,-3.5 L2.5,-7 M4,-1.5 L7.5,-3 M4.5,1.5 L7.5,3 M0,4 L-1,7.5 M-1,-4 L-3,-7.5"/>
 </g>
 <ellipse cx="0.5" cy="0.5" rx="5.2" ry="3.7" transform="rotate(40)" fill="#a9d18e" stroke="#1b6e7e" stroke-width="1.2"/>
 <path d="M-2,-1.5 L3,3" stroke="#7fb86a" stroke-width="1"/>
</g>

<!-- Run -->
<circle cx="220" cy="51" r="6.9" fill="url(#gGreen)" stroke="#2b8a33" stroke-width="1"/>
<path d="M217.3,46.5 L224.6,51 L217.3,55.5 Z" fill="#fff"/>

<!-- Profile (run + clock) -->
<circle cx="266" cy="55.3" r="3.6" fill="#fff" stroke="#1f5fa8" stroke-width="1.2"/>
<path d="M266,55.5 L264.3,53.6 M266,55.5 L268,56.5" stroke="#1f5fa8" stroke-width="1" fill="none"/>
<circle cx="265.6" cy="48.3" r="5.3" fill="url(#gGreen)" stroke="#2b8a33" stroke-width="0.8"/>
<path d="M263.8,45 L269,48.3 L263.8,51.6 Z" fill="#fff"/>
<path d="M271,51.5 H276 M271,53.5 H276 M271,55.5 H276 M271,57.5 H276" stroke="#7b8cc0" stroke-width="1"/>

<!-- External tools -->
<circle cx="313.5" cy="49.4" r="5.4" fill="url(#gGreen)" stroke="#2b8a33" stroke-width="0.8"/>
<path d="M311.6,46 L317,49.4 L311.6,52.8 Z" fill="#fff"/>
<rect x="315.3" y="53.6" width="8.6" height="5" rx="0.8" fill="#d63a36" stroke="#c02622" stroke-width="0.8"/>
<path d="M317.5,53.5 V52.3 H321.7 V53.5" fill="none" stroke="#c02622" stroke-width="1"/>
<path d="M315.5,55.7 H324" stroke="#f2a09c" stroke-width="0.8"/>

<!-- Skip breakpoints -->
<circle cx="376.5" cy="51.2" r="3.6" fill="#79aacb" stroke="#a9c9de" stroke-width="1"/>
<path d="M370.2,45 L382.8,56.8" stroke="#17247f" stroke-width="1.3"/>

<!-- Resume -->
<rect x="409.5" y="46.4" width="4" height="9.2" rx="0.8" fill="#fdeeb0" stroke="#b98f24" stroke-width="1"/>
<path d="M415.6,46.2 L423.8,51 L415.6,55.8 Z" fill="#58ad60" stroke="#2a7f3d" stroke-width="1" stroke-linejoin="round"/>

<!-- Suspend disabled -->
<rect x="439.5" y="46.4" width="4" height="9.2" fill="#ebe9e6" stroke="#d9d6d2"/>
<rect x="446" y="46.4" width="4" height="9.2" fill="#ebe9e6" stroke="#d9d6d2"/>

<!-- Terminate -->
<rect x="467.5" y="46.4" width="10.2" height="10" rx="1" fill="url(#gRed)" stroke="#c81e2a" stroke-width="1"/>
<rect x="468.6" y="47.5" width="8" height="7.8" fill="none" stroke="#f08a92" stroke-width="0.7"/>

<!-- Disconnect -->
<g stroke="#cc1f30" fill="none" stroke-width="1.1">
 <path d="M495.2,53 L496.3,46.2 L499.5,50.3 M500.5,51.8 L503.5,55.6 L504.6,49"/>
 <path d="M498.5,50.6 L501.5,51.4" stroke-width="0.8"/>
</g>
<circle cx="495.2" cy="54.6" r="2.4" fill="#ea3548" stroke="#c81e2a" stroke-width="0.6"/>
<circle cx="504.7" cy="47.3" r="2.4" fill="#ea3548" stroke="#c81e2a" stroke-width="0.6"/>
<circle cx="494.6" cy="54" r="0.8" fill="#f9b0b8"/><circle cx="504.1" cy="46.7" r="0.8" fill="#f9b0b8"/>

<!-- Step into -->
<path d="M533.8,46.3 H540.2 Q542.3,46.3 542.3,48.4 V51.2 H544.3 L540.8,55.2 L537.3,51.2 H539.3 V49.2 H533.8 Z" fill="#fff3b8" stroke="#c9952a" stroke-width="1" stroke-linejoin="round"/>
<rect x="533" y="55" width="4" height="2" fill="#35548c"/><rect x="544" y="55" width="4" height="2" fill="#35548c"/>

<!-- Step over -->
<path d="M561.5,52.8 Q560.3,46.3 567,46.3 Q573.6,46.3 573.8,51 H575.8 L572.5,55.4 L569,51 H571 Q570.8,49 567,49 Q563.6,49 564,52.8 Z" fill="#fff3b8" stroke="#c9952a" stroke-width="1" stroke-linejoin="round"/>
<rect x="565" y="55" width="4" height="2" fill="#35548c"/>

<!-- Step return disabled -->
<path d="M595.3,56 V51.5 Q595.3,48.5 598.5,48.5 H600 V46.3 L603.7,49.6 L600,53 V51 H598.8 Q598,51 598,52 V56 Z" fill="#efedeb" stroke="#d6d3cf" stroke-width="0.9" stroke-linejoin="round"/>
<rect x="589" y="55" width="4" height="2" fill="#d0cdca"/><rect x="600.3" y="55" width="4" height="2" fill="#d0cdca"/>

<!-- Instruction stepping -->
<use href="#istep" x="616" y="45.5"/>

<!-- Drop to frame disabled -->
<g stroke="#cfccc9" stroke-width="1.8"><path d="M645,45.2 H657 M645,49.2 H657 M645,53.2 H650"/></g>
<path d="M652,52 H655 Q657.5,52 657.5,54.3 H659.8 L656.6,58 L653.4,54.3 H655.2 Q655,53.8 652,54 Z" fill="#efedeb" stroke="#d3d0cc" stroke-width="0.9" stroke-linejoin="round"/>

<!-- Step filters disabled -->
<path d="M672.5,46.5 H683.5 V44.5 L687.5,47.8 L683.5,51 V49 H681.5 V53 H683.3 L680,57 L676.7,53 H678.5 V49 H672.5 Z" fill="#efedeb" stroke="#d3d0cc" stroke-width="0.9" stroke-linejoin="round"/>
<rect x="672" y="56" width="4" height="2" fill="#d0cdca"/><rect x="684" y="56" width="4" height="2" fill="#d0cdca"/>

<!-- Open element folder -->
<path d="M712.5,49.5 L714.5,47.5 H722.5 V52" fill="#f7dc94" stroke="#c27a1c" stroke-width="1" stroke-linejoin="round"/>
<path d="M712.5,49.5 V56.5 L713.5,57.5 H722.5 L726.8,52.3 H716.8 L712.5,56.5" fill="url(#gFold)" stroke="#c27a1c" stroke-width="1" stroke-linejoin="round"/>
<circle cx="719.4" cy="46.6" r="3.3" fill="#7b62b8" stroke="#5d479c" stroke-width="0.6"/><circle cx="718.6" cy="45.6" r="1.1" fill="#b4a4dc"/>
<circle cx="724.3" cy="49.2" r="3.4" fill="#3f9a5a" stroke="#2a7a42" stroke-width="0.6"/><circle cx="723.5" cy="48.1" r="1.1" fill="#8fd0a0"/>

<!-- Search torch -->
<g transform="translate(748.3,51.3) rotate(-43)">
 <path d="M-0.5,-2.5 H8.5 L10.8,0 L8.5,2.5 H-0.5 Z" fill="#fbe6a8" stroke="#e0901e" stroke-width="1" stroke-linejoin="round"/>
 <path d="M-5,-3.4 L-0.5,-2.6 V2.6 L-5,3.4 Z" fill="#bab6be" stroke="#9a7a50" stroke-width="0.7"/>
 <path d="M-10.8,-2.6 L-5,-3.3 V3.3 L-10.8,2.6 Z" fill="#fffbe0" stroke="#f4c038" stroke-width="0.8"/>
 <path d="M-10.5,-1.6 L-7,-2 V2 L-10.5,1.6 Z" fill="#ffffff"/>
 <rect x="4.2" y="-0.7" width="2.2" height="1.4" fill="#2a5fb0"/>
</g>

<!-- Open perspective -->
<g transform="translate(878,45)">
 <rect x="0.5" y="1.5" width="11.5" height="11" fill="#f4f9fd" stroke="#8a7a55"/>
 <rect x="0" y="1" width="9" height="2.4" fill="#2e6fbc"/>
 <path d="M4.3,3.5 V12.5 M0.5,7.6 H12" stroke="#8a7a55" stroke-width="0.9"/>
 <rect x="5" y="8.2" width="6.6" height="3.8" fill="#d8ecfa"/>
 <use href="#star" x="10.6" y="2.5"/>
</g>
<!-- chevron -->
<path d="M1003.6,42.2 H1005.6 L1003.8,47.6 H1002 Z M1007.8,42.2 H1009.8 L1008,47.6 H1006.2 Z" fill="#111"/>

<!-- Row 2: disabled pen -->
<path d="M20.5,87.5 H27.5 L35.3,83 V74.2 L24,86.8 Z" fill="#e6e4e1" stroke="#e0ddd9" stroke-width="0.6"/>
<path d="M31.3,78.6 L35.3,74.2 V80.5 L33,81.8 Z" fill="#d8d5d1"/>
<!-- Row 3 disabled icons -->
<g fill="#efedeb" stroke="#d3d0cc" stroke-width="0.9" stroke-linejoin="round">
 <path d="M22.5,103.5 H26.5 V109.5 H28.8 L24.5,114.5 L20.2,109.5 H22.5 Z"/>
 <path d="M70.5,118 H74.5 V112 H76.8 L72.5,107 L68.2,112 H70.5 Z"/>
 <path d="M118.5,111 L124.5,105.2 V108 H131.5 V114 H124.5 V116.8 Z"/>
 <path d="M145.3,111 L151.3,105.2 V108 H158.3 V114 H151.3 V116.8 Z"/>
 <path d="M206.7,111 L200.7,105.2 V108 H193.7 V114 H200.7 V116.8 Z"/>
</g>
<g stroke="#dcd9d5" stroke-width="1" fill="none">
 <path d="M33.5,106 V118.5 M21,118.5 H33.5"/>
 <path d="M28,108.5 H32 M28,111 H32 M29,113.5 H32 M29,116 H32"/>
 <path d="M81.5,103 V116 M69,103.5 H81"/>
 <path d="M76,105.5 H80 M77,108 H80 M77,110.5 H80 M77,113 H80"/>
</g>
<rect x="23" y="115.5" width="3" height="1.6" fill="#c8c5c1"/><rect x="71" y="104.5" width="3" height="1.6" fill="#c8c5c1"/>
<path d="M116,105.5 L121,110.5 M121,105.5 L116,110.5 M118.5,104.5 V111.5 M115.5,108 H121.5" stroke="#bfbcb8" stroke-width="0.8"/>
</svg>
<!--TB-END-->

</body>
</html>
